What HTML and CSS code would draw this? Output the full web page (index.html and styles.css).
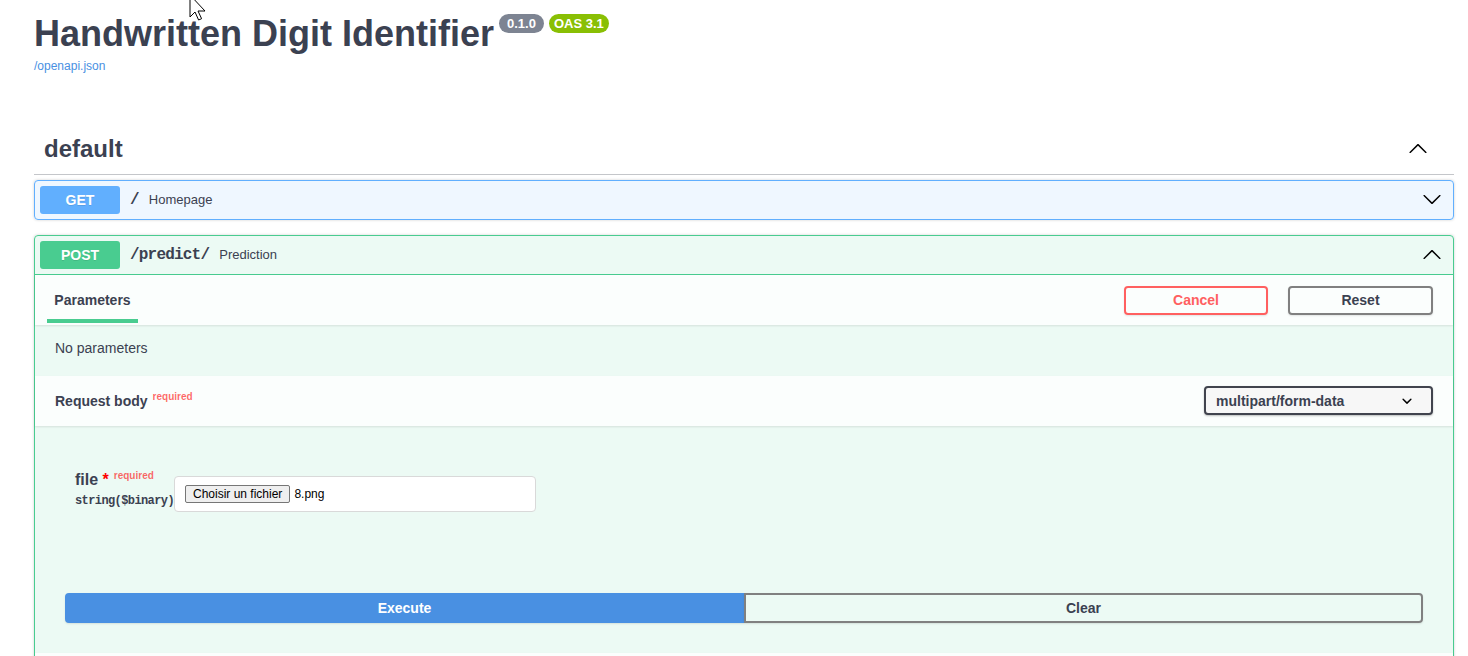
FILE: index.html
```html
<!DOCTYPE html>
<html lang="fr">
<head>
<meta charset="utf-8">
<title>Handwritten Digit Identifier</title>
<link rel="stylesheet" href="styles.css">
</head>
<body>
<div class="wrapper">
  <section class="info">
    <h2 class="title">Handwritten Digit Identifier<small class="badge version">0.1.0</small><small class="badge oas">OAS 3.1</small></h2>
    <a class="spec-link" href="#">/openapi.json</a>
  </section>

  <section class="tag-section">
    <h3 class="tag-header">
      <span class="tag-name">default</span>
      <svg class="arrow" viewBox="0 0 20 20" aria-hidden="true"><path d="M17.418 14.908c.272.268.709.268.979 0s.271-.701 0-.969l-7.908-7.83c-.27-.268-.707-.268-.979 0l-7.908 7.83c-.27.268-.27.701 0 .969.271.268.709.268.979 0L10 7.767l7.418 7.141z"/></svg>
    </h3>

    <div class="opblock get">
      <div class="summary">
        <span class="method get-method">GET</span>
        <span class="path">/</span>
        <span class="desc">Homepage</span>
        <svg class="arrow op-arrow" viewBox="0 0 20 20" aria-hidden="true"><path d="M17.418 6.109c.272-.268.709-.268.979 0s.271.701 0 .969l-7.908 7.83c-.27.268-.707.268-.979 0l-7.908-7.83c-.27-.268-.27-.701 0-.969.271-.268.709-.268.979 0L10 13.25l7.418-7.141z"/></svg>
      </div>
    </div>

    <div class="opblock post">
      <div class="summary open">
        <span class="method post-method">POST</span>
        <span class="path">/predict/</span>
        <span class="desc">Prediction</span>
        <svg class="arrow op-arrow" viewBox="0 0 20 20" aria-hidden="true"><path d="M17.418 14.908c.272.268.709.268.979 0s.271-.701 0-.969l-7.908-7.83c-.27-.268-.707-.268-.979 0l-7.908 7.83c-.27.268-.27.701 0 .969.271.268.709.268.979 0L10 7.767l7.418 7.141z"/></svg>
      </div>

      <div class="section-header params-header">
        <div class="tab"><h4 class="tab-title">Parameters</h4></div>
        <div class="try-btns">
          <button class="btn cancel">Cancel</button>
          <button class="btn reset">Reset</button>
        </div>
      </div>

      <div class="no-params">No parameters</div>

      <div class="section-header body-header">
        <h4 class="body-title">Request body<span class="req">required</span></h4>
        <div class="select">
          <span>multipart/form-data</span>
          <svg class="select-arrow" viewBox="0 0 20 20" aria-hidden="true"><path d="M13.418 7.859a.695.695 0 01.978 0 .68.68 0 010 .969l-3.908 3.83a.697.697 0 01-.979 0l-3.908-3.83a.68.68 0 010-.969.695.695 0 01.978 0L10 11l3.418-3.141z"/></svg>
        </div>
      </div>

      <div class="req-body">
        <div class="param-row">
          <div class="param-name">
            <div class="name">file<span class="star">&nbsp;*</span><span class="req req-file">required</span></div>
            <div class="type">string($binary)</div>
          </div>
          <div class="file-input">
            <button class="file-btn">Choisir un fichier</button>
            <span class="file-name">8.png</span>
          </div>
        </div>
      </div>

      <div class="btn-group">
        <button class="btn execute">Execute</button>
        <button class="btn clear">Clear</button>
      </div>

      <div class="section-header responses-header"></div>
    </div>
  </section>
</div>

<svg class="cursor" viewBox="0 0 17 27" aria-hidden="true"><path d="M1 1 L1 23 L6 18 L9.6 26 L12.6 24.7 L9 17 L16 17 Z" fill="#fff" stroke="#000" stroke-width="1" stroke-linejoin="miter"/></svg>
</body>
</html>
```

FILE: styles.css
```css
html, body {
  margin: 0;
  padding: 0;
  background: #fff;
  overflow: hidden;
}

body {
  position: relative;
  width: 1468px;
  height: 656px;
  font-family: "Liberation Sans", Arial, sans-serif;
  color: #3b4151;
}

.wrapper {
  padding: 0 14px 0 34px;
}

/* ---------- info ---------- */
.info {
  padding-top: 14px;
  margin-bottom: 51px;
}

.title {
  margin: 0;
  font-size: 36px;
  line-height: 40px;
  font-weight: 700;
  color: #3b4151;
}

.badge {
  display: inline-block;
  vertical-align: top;
  margin-left: 5px;
  padding: 2px 6px;
  border-radius: 57px;
  background: #7d8492;
  color: #fff;
  font-size: 13px;
  line-height: 15px;
  font-weight: 700;
}

.badge.version {
  padding: 2px 8px;
}

.badge.oas {
  background: #89bf04;
  padding: 2px 5px;
}

.spec-link {
  display: block;
  margin-top: 5px;
  font-size: 12px;
  line-height: 14px;
  color: #4990e2;
  text-decoration: none;
  width: max-content;
}

/* ---------- tag ---------- */
.tag-header {
  display: flex;
  align-items: center;
  justify-content: space-between;
  margin: 0 0 5px;
  padding: 10px 20px 10px 10px;
  border-bottom: 1px solid rgba(59, 65, 81, .3);
  font-size: 24px;
  line-height: 30px;
  font-weight: 700;
  color: #3b4151;
}

.arrow {
  width: 20px;
  height: 20px;
  margin-right: 6px;
  margin-top: -3px;
  fill: #000;
  flex: none;
}

/* ---------- operations ---------- */
.opblock {
  border: 1px solid #000;
  border-radius: 4px;
  margin: 0 0 15px;
  box-shadow: 0 0 3px rgba(0, 0, 0, .19);
}

.opblock.get {
  background: rgba(97, 175, 254, .1);
  border-color: #61affe;
}

.opblock.post {
  background: rgba(73, 204, 144, .1);
  border-color: #49cc90;
}

.summary {
  display: flex;
  align-items: center;
  padding: 5px;
}

.summary.open {
  border-bottom: 1px solid #49cc90;
}

.method {
  min-width: 80px;
  padding: 6px 0;
  border-radius: 3px;
  font-size: 14px;
  line-height: 16px;
  font-weight: 700;
  text-align: center;
  color: #fff;
  text-shadow: 0 1px 0 rgba(0, 0, 0, .1);
}

.get-method { background: #61affe; }
.post-method { background: #49cc90; }

.path {
  padding: 0 10px;
  font-family: "Liberation Mono", "DejaVu Sans Mono", monospace;
  font-size: 16px;
  line-height: 18px;
  font-weight: 700;
  letter-spacing: -0.8px;
  color: #3b4151;
}

.desc {
  font-size: 13px;
  line-height: 15px;
  margin-top: -1px;
  color: #3b4151;
}

.op-arrow {
  margin-left: auto;
}

/* ---------- section headers ---------- */
.section-header {
  display: flex;
  align-items: center;
  justify-content: space-between;
  min-height: 50px;
  box-sizing: border-box;
  padding: 0 20px;
  background: rgba(255, 255, 255, .8);
  box-shadow: 0 1px 2px rgba(0, 0, 0, .1);
  position: relative;
}

.params-header {
  align-items: stretch;
  padding-left: 12px;
}

.tab {
  display: flex;
  align-items: center;
  justify-content: center;
  width: 91px;
  padding-top: 6px;
  margin-bottom: 2px;
  border-bottom: 4px solid #49cc90;
}

.tab-title,
.body-title {
  margin: 0;
  font-size: 14px;
  line-height: 17px;
  font-weight: 700;
  color: #3b4151;
}

.try-btns {
  display: flex;
  align-items: center;
  gap: 20px;
}

.btn {
  box-sizing: border-box;
  border: 2px solid gray;
  border-radius: 4px;
  background: transparent;
  box-shadow: 0 1px 2px rgba(0, 0, 0, .1);
  font-family: "Liberation Sans", Arial, sans-serif;
  font-size: 14px;
  line-height: 15px;
  font-weight: 700;
  padding: 5px 23px;
  color: #3b4151;
}

.cancel {
  width: 144px;
  border-color: #ff6060;
  color: #ff6060;
}

.reset {
  width: 145px;
}

.no-params {
  padding: 13px 20px 18px;
  font-size: 14px;
  line-height: 20px;
  color: #3b4151;
}

.req {
  font-size: 10px;
  line-height: 0;
  font-weight: 700;
  color: rgba(255, 0, 0, .6);
  vertical-align: 6px;
  padding-left: 5px;
}

.select {
  box-sizing: border-box;
  width: 229px;
  height: 29px;
  margin-top: -1px;
  display: flex;
  align-items: center;
  justify-content: space-between;
  padding: 0 10px;
  border: 2px solid #41444e;
  border-radius: 4px;
  background: #f7f7f7;
  box-shadow: 0 1px 2px 0 rgba(0, 0, 0, .25);
  font-size: 14px;
  font-weight: 700;
  color: #3b4151;
}

.select-arrow {
  width: 20px;
  height: 20px;
  fill: #000;
  margin-right: 4px;
}

/* ---------- request body ---------- */
.req-body {
  padding: 44px 40px 51px;
}

.param-row {
  display: flex;
  align-items: flex-start;
}

.param-name {
  width: 99px;
  flex: none;
  white-space: nowrap;
}

.name {
  font-size: 16px;
  line-height: 20px;
  font-weight: 700;
  color: #3b4151;
}

.star {
  color: red;
}

.req-file {
  font-weight: 700;
}

.type {
  padding-top: 4px;
  font-family: "Liberation Mono", "DejaVu Sans Mono", monospace;
  font-size: 12px;
  line-height: 14px;
  font-weight: 700;
  letter-spacing: -0.6px;
  color: #3b4151;
}

.file-input {
  width: 340px;
  height: 17px;
  margin-top: 6px;
  padding: 8px 10px 9px;
  display: flex;
  align-items: center;
  background: #fff;
  border: 1px solid #d9d9d9;
  border-radius: 4px;
}

.file-btn {
  font-family: "Liberation Sans", Arial, sans-serif;
  font-size: 12px;
  line-height: 14px;
  padding: 1px 7px;
  border: 1px solid #767676;
  border-radius: 2px;
  background: #efefef;
  color: #000;
}

.file-name {
  margin-left: 4px;
  font-size: 12px;
  color: #000;
}

/* ---------- execute ---------- */
.btn-group {
  display: flex;
  padding: 30px;
}

.btn-group .btn {
  flex: 1;
  line-height: 16px;
}

.execute {
  background: #4990e2;
  border-color: #4990e2;
  color: #fff;
  border-radius: 4px 0 0 4px;
}

.clear {
  border-radius: 0 4px 4px 0;
}

/* ---------- mouse pointer overlay ---------- */
.cursor {
  position: absolute;
  left: 189px;
  top: -6px;
  width: 17px;
  height: 27px;
}
```
